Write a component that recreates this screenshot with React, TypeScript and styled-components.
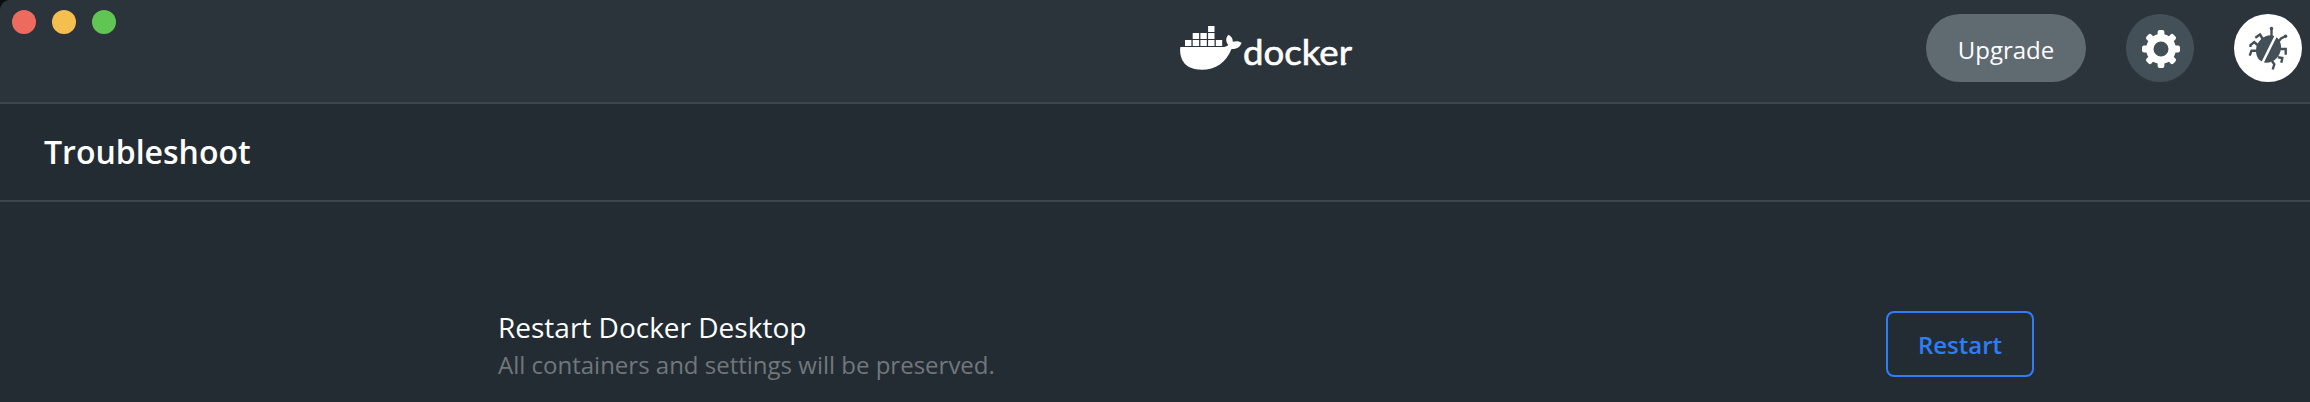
import React from "react";
import styled, { createGlobalStyle } from "styled-components";

const GlobalStyle = createGlobalStyle`
  * { box-sizing: border-box; }
  body { margin: 0; background: #0b0d0f; font-family: "Open Sans", sans-serif; overflow: hidden; }
`;

const Window = styled.div`
  display: flex;
  flex-direction: column;
  width: 2310px;
  height: 402px;
  overflow: hidden;
  background: #242c33;
  border-top-left-radius: 10px;
  color: #fff;
`;

const TitleBar = styled.header`
  display: grid;
  grid-template-columns: 1fr auto 1fr;
  height: 104px;
  flex: none;
  background: #2c343b;
  border-bottom: 2px solid #3e464d;
`;

const WindowControls = styled.div`
  display: flex;
  gap: 16px;
  padding: 10px 0 0 12px;
`;

const Light = styled.span<{ $color: string }>`
  width: 24px;
  height: 24px;
  border-radius: 50%;
  background: ${(p) => p.$color};
`;

const Logo = styled.svg`
  display: block;
  width: 174px;
  height: 48px;
  margin: 24px 0 0 224px;
  overflow: visible;
`;

const Wordmark = styled.text`
  font-family: Lato, sans-serif;
  font-size: 35px;
  font-weight: 400;
  stroke: #fff;
  stroke-width: 0.6px;
  stroke-linejoin: round;
`;

const Actions = styled.div`
  display: flex;
  justify-content: flex-end;
  gap: 40px;
  padding: 14px 8px 0 0;
`;

const UpgradeButton = styled.button`
  width: 160px;
  height: 68px;
  padding: 2px 0 0;
  border: 0;
  border-radius: 34px;
  background: #606b71;
  color: #fff;
  font: 400 24px "Open Sans", sans-serif;
`;

const RoundButton = styled.button<{ $active?: boolean }>`
  display: grid;
  place-items: center;
  width: 68px;
  height: 68px;
  padding: 0;
  border: 0;
  border-radius: 50%;
  background: ${(p) => (p.$active ? "#fff" : "#445058")};
  color: ${(p) => (p.$active ? "#445058" : "#fff")};
  svg { display: block; width: 68px; height: 68px; }
`;

const SubHeader = styled.div`
  display: flex;
  align-items: center;
  flex: none;
  height: 98px;
  padding-left: 44px;
  border-bottom: 2px solid #3e464d;
`;

const Title = styled.h1`
  margin: 0;
  font-size: 32px;
  line-height: 44px;
  font-weight: 600;
`;

const Row = styled.section`
  display: flex;
  justify-content: space-between;
  align-items: flex-start;
  width: 1536px;
  margin: 106px 0 0 498px;
`;

const RowTitle = styled.h2`
  margin: 0;
  font-size: 28px;
  line-height: 38px;
  font-weight: 400;
`;

const RowHint = styled.p`
  margin: 0;
  font-size: 24px;
  line-height: 37px;
  color: #71777b;
`;

const RestartButton = styled.button`
  width: 148px;
  height: 66px;
  margin-top: 3px;
  padding: 0;
  border: 2px solid #2f7df6;
  border-radius: 8px;
  background: transparent;
  color: #2f7df6;
  font: 600 24px "Open Sans", sans-serif;
`;

const containers = [
  [5, 16], [12.7, 16], [20.4, 16], [28.1, 16], [35.8, 16],
  [12.7, 9], [20.4, 9], [28.1, 9],
  [28.1, 2],
];

const DockerLogo = () => (
  <Logo viewBox="0 0 174 48" fill="#fff" role="img" aria-label="Docker">
    {containers.map(([x, y]) => (
      <rect key={`${x}-${y}`} x={x} y={y} width="6.4" height="6" />
    ))}
    <path d="M0.8 23H42C45 23 47 22.5 48.2 21C45.500 17.500 45.500 13.500 48.700 10.800C51.500 12.500 53 15 52.800 17.800C56 16.800 59.500 17.200 61.600 18.800C60 23.500 56.500 25.300 51.500 25C46 38.500 36 45.800 21.500 45.800C6.500 45.800-.8 37 .2 23.600Q.3 23 .8 23Z" />
    <Wordmark x="63" y="41" textLength="109" lengthAdjust="spacingAndGlyphs">docker</Wordmark>
    <circle cx="165.600" cy="39.700" r="0.900" />
  </Logo>
);

const teeth = [0, 45, 90, 135, 180, 225, 270, 315];

const GearIcon = () => (
  <svg viewBox="0 0 68 68" aria-hidden="true">
    <circle cx="35" cy="35" r="11.200" fill="none" stroke="currentColor" strokeWidth="7.400" />
    {teeth.map((a) => (
      <rect key={a} x="31.600" y="16" width="6.800" height="8" rx="2" fill="currentColor" transform={`rotate(${a} 35 35)`} />
    ))}
  </svg>
);

const BugIcon = () => (
  <svg viewBox="0 0 68 68" fill="none" stroke="currentColor" strokeWidth="2.400" aria-hidden="true">
    <ellipse cx="34.500" cy="35" rx="12" ry="14.200" fill="currentColor" stroke="none" transform="rotate(28 34.500 35)" />
    <path d="M42.500 20.500L28.300 49" stroke="#fff" strokeWidth="2.500" />
    <path d="M37.500 23L37.500 14M44.500 27.500L47 24.500L52 22" strokeLinecap="round" />
    <path d="M28.800 25L26 20.500L21.300 23.700M24 31.500L20.200 28L16.500 31V33M23 36.700H17.500L15.700 41.700M46 35H51.700V40.700M44 43.300L48.300 44L47.300 48.700M38 47L40.300 50.300L38.700 55.500" />
    <g fill="currentColor" stroke="none">
      <circle cx="37.500" cy="14.600" r="1.700" />
      <circle cx="51.500" cy="22.200" r="1.700" />
    </g>
  </svg>
);

export default function App() {
  return (
    <>
      <GlobalStyle />
      <Window>
        <TitleBar>
          <WindowControls>
            <Light $color="#ed6a5e" />
            <Light $color="#f5bf4f" />
            <Light $color="#61c554" />
          </WindowControls>
          <DockerLogo />
          <Actions>
            <UpgradeButton>Upgrade</UpgradeButton>
            <RoundButton aria-label="Settings"><GearIcon /></RoundButton>
            <RoundButton $active aria-label="Troubleshoot"><BugIcon /></RoundButton>
          </Actions>
        </TitleBar>
        <SubHeader>
          <Title>Troubleshoot</Title>
        </SubHeader>
        <Row>
          <div>
            <RowTitle>Restart Docker Desktop</RowTitle>
            <RowHint>All containers and settings will be preserved.</RowHint>
          </div>
          <RestartButton>Restart</RestartButton>
        </Row>
      </Window>
    </>
  );
}
